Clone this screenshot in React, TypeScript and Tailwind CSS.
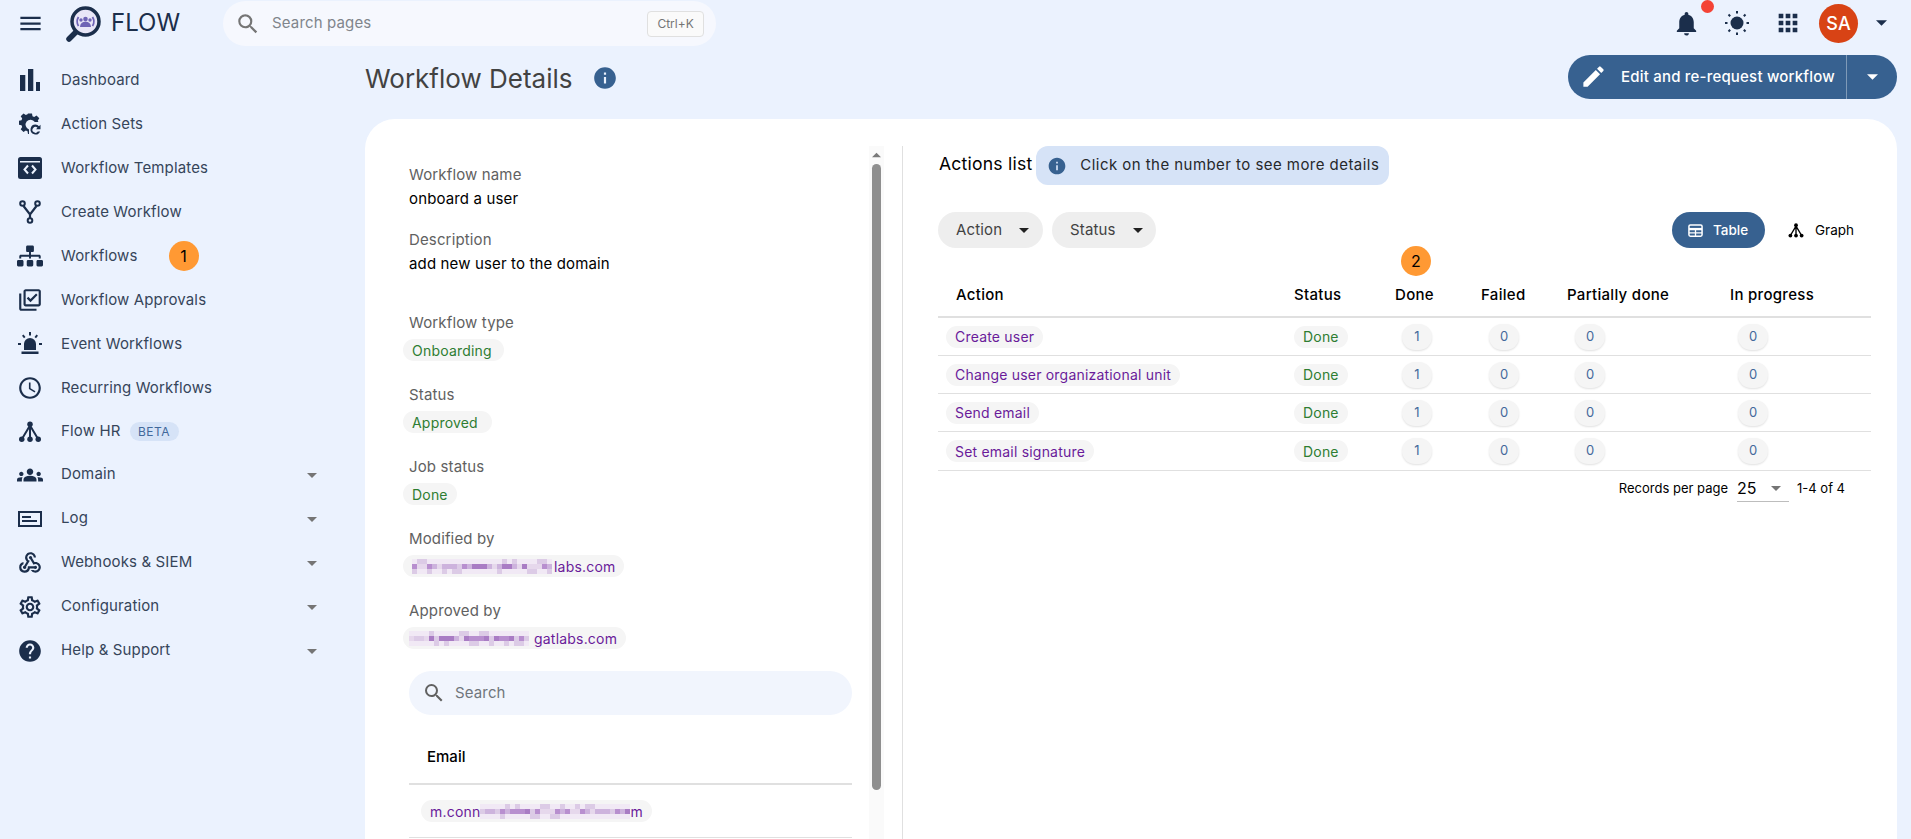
import type { ReactNode } from "react";
import {
  MdApps,
  MdEdit,
  MdGroups,
  MdHelp,
  MdInfo,
  MdMenu,
  MdNotifications,
  MdOutlineAccessTime,
  MdOutlineLibraryAddCheck,
  MdOutlineSettings,
  MdSearch,
  MdWebhook,
} from "react-icons/md";
import { FaSitemap } from "react-icons/fa";

function Caret({ className }: { className: string }) {
  return (
    <svg viewBox="0 0 10 5" className={className} fill="currentColor">
      <path d="M0 0h10L5 5z" />
    </svg>
  );
}

function BarsIcon() {
  return (
    <svg viewBox="0 0 24 24" className="h-6 w-6" fill="currentColor">
      <rect x="2" y="7" width="5.300" height="16" />
      <rect x="10" y="1" width="5.300" height="22" />
      <rect x="18" y="14" width="4" height="9" />
    </svg>
  );
}

function GearRefreshIcon() {
  return (
    <svg viewBox="0 0 24 24" className="h-6 w-6" fill="currentColor">
      <path d="M10 1.500h4l.5 2.700 1.700.7 2.300-1.500 2.800 2.800-1.500 2.300.6 1.500h-3.600A5 5 0 1 0 11 17.400V22h-1l-.5-2.700-1.700-.7-2.300 1.500-2.800-2.800 1.500-2.300-.7-1.700L1 12.800v-4l2.500-.5.7-1.700-1.500-2.300L5.500 1.500l2.300 1.500 1.700-.7z" />
      <path d="M17.500 12.500a5 5 0 1 0 4.600 7h-2.300a2.900 2.900 0 1 1-.3-3.700l-1.500 1.500H22.500v-4.500l-1.500 1.500a5 5 0 0 0-3.500-1.800z" />
    </svg>
  );
}

function TemplateIcon() {
  return (
    <svg viewBox="0 0 24 24" className="h-6 w-6">
      <rect x="0" y="1" width="24" height="22" rx="2.500" fill="currentColor" />
      <rect x="2" y="5" width="20" height="1.500" fill="#ebf2fe" />
      <path d="M10 9.500 6.500 13.500l3.500 4M14 9.500l3.500 4-3.500 4" fill="none" stroke="#ebf2fe" strokeWidth="2" />
    </svg>
  );
}

function ForkIcon() {
  return (
    <svg viewBox="0 0 24 24" className="h-6 w-6" fill="none" stroke="currentColor" strokeWidth="2">
      <circle cx="4.500" cy="3.500" r="2.300" />
      <circle cx="19.500" cy="3.500" r="2.300" />
      <circle cx="12" cy="20.500" r="2.300" />
      <path d="M5.500 6 12 14.500 18.500 6M12 14.500v3.500" strokeWidth="2.200" />
    </svg>
  );
}

function SirenIcon() {
  return (
    <svg viewBox="0 0 24 24" className="h-6 w-6" fill="currentColor">
      <path d="M6 18v-6a6 6 0 0 1 12 0v6zM3.500 19.500h17V22h-17z" />
      <path d="M11 0h2v3.500h-2zM4 3.800l1.500-1.300 2 2.500L6 6.300zM20 3.800l-1.500-1.300-2 2.500L18 6.300zM0 11h3v2H0zM21 11h3v2h-3z" />
    </svg>
  );
}

function TreeIcon({ className }: { className: string }) {
  return (
    <svg viewBox="0 0 24 24" className={className} fill="currentColor">
      <circle cx="12" cy="3.500" r="3" />
      <circle cx="3" cy="20" r="3" />
      <circle cx="12" cy="20" r="3" />
      <circle cx="21" cy="20" r="3" />
      <path d="M12 4v16M12 5 3 20M12 5l9 15" fill="none" stroke="currentColor" strokeWidth="2.200" />
    </svg>
  );
}

function LogIcon() {
  return (
    <svg viewBox="0 0 24 24" className="h-6 w-6" fill="none" stroke="currentColor">
      <rect x="1" y="5" width="22" height="14" strokeWidth="2" />
      <path d="M4 10h9M4 14h15" strokeWidth="1.800" />
    </svg>
  );
}

function SunIcon() {
  return (
    <svg viewBox="0 0 24 24" className="h-6 w-6" fill="currentColor" stroke="currentColor">
      <circle cx="12" cy="12" r="6.500" stroke="none" />
      <path
        d="M12 0v2.500M12 21.500V24M0 12h2.500M21.500 12H24M3.500 3.500l1.700 1.700M18.800 18.800l1.700 1.700M3.500 20.500l1.700-1.700M18.800 5.200l1.700-1.700"
        strokeWidth="2"
      />
    </svg>
  );
}

function TableIcon() {
  return (
    <svg viewBox="0 0 16 16" className="h-[15px] w-[15px]" fill="none" stroke="currentColor">
      <rect x="1" y="2" width="14" height="12" rx="1.500" strokeWidth="1.600" />
      <path d="M1 6.500h14" strokeWidth="2.500" />
      <path d="M8 6v8M1 10.500h14" strokeWidth="1.400" />
    </svg>
  );
}

function Logo() {
  return (
    <svg viewBox="0 0 40 38" className="h-[38px] w-[40px] shrink-0">
      <path d="M12 28 5 35" stroke="#1b2e4b" strokeWidth="5.500" strokeLinecap="round" />
      <circle cx="21.500" cy="17.500" r="13.500" fill="#e9e6f7" stroke="#1b2e4b" strokeWidth="3.500" />
      <path d="M14.500 22a8.500 8.500 0 0 1 0-9M28.500 13a8.500 8.500 0 0 1 0 9" fill="none" stroke="#6f63b5" strokeWidth="1.800" />
      <circle cx="21.500" cy="15" r="2.300" fill="#6f63b5" />
      <circle cx="17" cy="16" r="1.700" fill="#6f63b5" />
      <circle cx="26" cy="16" r="1.700" fill="#6f63b5" />
      <path d="M16 23a5.500 5.500 0 0 1 11 0z" fill="#6f63b5" />
    </svg>
  );
}

const ICON_SIZE = "h-[26px] w-[26px] shrink-0";

const NAV: { label: string; icon: ReactNode; expand?: boolean; badge?: string; beta?: boolean }[] = [
  { label: "Dashboard", icon: <BarsIcon /> },
  { label: "Action Sets", icon: <GearRefreshIcon /> },
  { label: "Workflow Templates", icon: <TemplateIcon /> },
  { label: "Create Workflow", icon: <ForkIcon /> },
  { label: "Workflows", icon: <FaSitemap className={ICON_SIZE} />, badge: "1" },
  { label: "Workflow Approvals", icon: <MdOutlineLibraryAddCheck className={ICON_SIZE} /> },
  { label: "Event Workflows", icon: <SirenIcon /> },
  { label: "Recurring Workflows", icon: <MdOutlineAccessTime className={ICON_SIZE} /> },
  { label: "Flow HR", icon: <TreeIcon className="h-[22px] w-[22px]" />, beta: true },
  { label: "Domain", icon: <MdGroups className={ICON_SIZE} />, expand: true },
  { label: "Log", icon: <LogIcon />, expand: true },
  { label: "Webhooks & SIEM", icon: <MdWebhook className={ICON_SIZE} />, expand: true },
  { label: "Configuration", icon: <MdOutlineSettings className={ICON_SIZE} />, expand: true },
  { label: "Help & Support", icon: <MdHelp className={ICON_SIZE} />, expand: true },
];

const STEP = "flex h-[30px] w-[30px] items-center justify-center rounded-full bg-[#ff9933] text-[16px] text-black";

const PIXEL_TONES = ["bg-[#e6d8ec]", "bg-[#cdb3dd]", "bg-[#b88fcf]", "bg-[#dccbe6]", "bg-[#a97cc4]", "bg-[#f1e9f5]"];

// the emails are pixelated in the screenshot
function Pixels({ seed, count }: { seed: number; count: number }) {
  return (
    <span className="inline-flex">
      {Array.from({ length: count }, (_, i) => (
        <span key={i} className="flex w-[5px] flex-col">
          {[0, 1, 2].map((r) => (
            <span
              key={r}
              className={`h-[5px] ${r === 1 ? PIXEL_TONES[(i * 37 + seed * 11 + ((i * i) % 17)) % 5] : PIXEL_TONES[(i * 53 + r * 7 + seed + ((i * i) % 13)) % 4 === 0 ? 3 : 5]}`}
            />
          ))}
        </span>
      ))}
    </span>
  );
}

function Chip({ children, className }: { children: ReactNode; className: string }) {
  return (
    <span className={`inline-flex h-[22px] items-center whitespace-nowrap rounded-full bg-[#f5f5f5] pl-[9px] text-[14px] tracking-[0.2px] ${className}`}>
      {children}
    </span>
  );
}

const LABEL = "h-[20px] text-[15px] leading-[20px] tracking-[0.14px] text-[#616161]";
const VALUE = "mt-[4px] h-[20px] text-[15px] leading-[20px] tracking-[0.14px] text-black";

function Field({ label, children }: { label: string; children: ReactNode }) {
  return (
    <div className="mt-[24px] flex flex-col items-start">
      <div className={LABEL}>{label}</div>
      <div className="-ml-[6px] mt-[6px] flex h-[22px]">{children}</div>
    </div>
  );
}

const ROW_GRID = "grid grid-cols-[356px_100px_87px_86px_163px_1fr] items-center";
const ACTIONS = ["Create user", "Change user organizational unit", "Send email", "Set email signature"];

function CountChip({ value }: { value: string }) {
  return (
    <span className="ml-[8px] flex h-[26px] w-[30px] items-center justify-center rounded-full bg-[#f5f5f5] text-[13px] text-[#44699b] shadow-[0_1px_2px_rgba(0,0,0,0.12)]">
      {value}
    </span>
  );
}

export default function App() {
  return (
    <div className="h-[839px] w-[1911px] overflow-hidden bg-[#ebf2fe] font-['Inter',sans-serif] text-[#1b2e4b]">
      <header className="flex h-[46px] items-center">
        <MdMenu className="ml-[17px] h-[27px] w-[27px]" />
        <span className="ml-[20px]">
          <Logo />
        </span>
        <span className="ml-[7px] text-[24px] text-[#1b2e4b]">FLOW</span>
        <div className="ml-[43px] mt-[1px] flex h-[45px] w-[493px] items-center rounded-full bg-[#f6f8fe] pl-[12px] pr-[12px]">
          <MdSearch className="h-[26px] w-[26px] text-[#757575]" />
          <span className="ml-[11px] text-[15px] tracking-[0.14px] text-[#80858c]">Search pages</span>
          <span className="ml-auto flex h-[26px] w-[57px] items-center justify-center rounded-[4px] border border-[#e0e0e0] bg-[#fafafa] text-[12px] text-[#757575]">
            Ctrl+K
          </span>
        </div>
        <div className="ml-auto flex items-center pr-[24px]">
          <span className="relative">
            <MdNotifications className="h-[29px] w-[29px]" />
            <span className="absolute -right-[13px] -top-[9px] h-[13px] w-[13px] rounded-full bg-[#f44336]" />
          </span>
          <span className="ml-[24px]">
            <SunIcon />
          </span>
          <MdApps className="ml-[25px] h-[28px] w-[28px]" />
          <span className="ml-[17px] flex h-[39px] w-[39px] items-center justify-center rounded-full bg-[#d84315] text-[18px] font-medium text-white">SA</span>
          <Caret className="ml-[18px] h-[6px] w-[11px]" />
        </div>
      </header>

      <div className="flex">
        <nav className="w-[365px] shrink-0 pt-[12px]">
          {NAV.map((item, i) => (
            <div key={item.label} className={`flex items-center pl-[18px] ${i === 8 ? "h-[43px]" : "h-[44px]"}`}>
              <span className="flex w-[24px] items-center justify-center">{item.icon}</span>
              <span className={`ml-[19px] text-[15px] tracking-[0.14px] text-[#36455a] ${item.expand ? "mb-[2px]" : ""}`}>{item.label}</span>
              {item.badge && <span className={`${STEP} ml-[31px]`}>{item.badge}</span>}
              {item.beta && (
                <span className="ml-[9px] flex h-[19px] w-[49px] items-center justify-center rounded-full bg-[#d6e3f7] text-[12px] tracking-[0.5px] text-[#41689b]">BETA</span>
              )}
              {item.expand && <Caret className="ml-auto mr-[48px] h-[5px] w-[10px] text-[#757575]" />}
            </div>
          ))}
        </nav>

        <main className="w-[1532px] shrink-0">
          <div className="flex h-[73px] items-center pb-[12px]">
            <h1 className="mt-[3px] text-[26px] text-[#424242]">Workflow Details</h1>
            <MdInfo className="ml-[20px] mt-[3px] h-[26px] w-[26px] text-[#376190]" />
            <div className="ml-auto flex h-[44px] w-[329px] items-center rounded-full bg-[#376190] text-white">
              <MdEdit className="ml-[12px] h-[27px] w-[27px]" />
              <span className="ml-[14px] mt-[1px] whitespace-nowrap text-[15px] font-medium tracking-[0.2px]">Edit and re-request workflow</span>
              <span className="ml-auto flex h-full w-[51px] items-center justify-center border-l border-[#7f9ab8]">
                <Caret className="h-[6px] w-[11px]" />
              </span>
            </div>
          </div>

          <div className="flex h-[720px] rounded-t-[30px] bg-white pt-[27px]">
            <div className="flex h-full w-[538px] shrink-0 border-r border-[#e0e0e0] pl-[44px] pr-[18px]">
              <div className="w-[443px] shrink-0 pt-[19px]">
                <div className={LABEL}>Workflow name</div>
                <div className={VALUE}>onboard a user</div>
                <div className={`mt-[21px] ${LABEL}`}>Description</div>
                <div className={VALUE}>add new user to the domain</div>
                <div className="h-[15px]" />
                <Field label="Workflow type">
                  <Chip className="pr-[12px] text-[#2e7d32]">Onboarding</Chip>
                </Field>
                <Field label="Status">
                  <Chip className="pr-[14px] text-[#2e7d32]">Approved</Chip>
                </Field>
                <Field label="Job status">
                  <Chip className="pr-[9px] text-[#2e7d32]">Done</Chip>
                </Field>
                <Field label="Modified by">
                  <Chip className="pr-[8px] text-[#6a1b9a]">
                    <span className="mr-[2px] flex">
                      <Pixels seed={2} count={28} />
                    </span>
                    labs.com
                  </Chip>
                </Field>
                <Field label="Approved by">
                  <Chip className="pr-[9px] text-[#6a1b9a]">
                    <span className="-ml-[3px] mr-[5px] flex">
                      <Pixels seed={5} count={24} />
                    </span>
                    gatlabs.com
                  </Chip>
                </Field>
                <div className="mt-[22px] flex h-[44px] items-center rounded-full bg-[#f1f5fd] pl-[13px]">
                  <MdSearch className="h-[24px] w-[24px] text-[#616161]" />
                  <span className="ml-[9px] text-[15px] tracking-[0.14px] text-[#70757c]">Search</span>
                </div>
                <div className="flex h-[70px] items-center border-b-2 border-[#e0e0e0] pl-[18px] pt-[17px] text-[15px] font-medium text-black">Email</div>
                <div className="flex h-[53px] items-center border-b border-[#e0e0e0] pl-[12px]">
                  <Chip className="pr-[9px] text-[#6a1b9a]">
                    m.conn
                    <Pixels seed={3} count={30} />
                    m
                  </Chip>
                </div>
              </div>
              <div className="ml-[17px] h-full w-[15px] shrink-0 bg-[#fafafa] pt-[6px]">
                <Caret className="mx-auto h-[6px] w-[9px] rotate-180 text-[#7a7a7a]" />
                <div className="mx-auto mt-[6px] h-[626px] w-[9px] rounded-full bg-[#8f8f8f]" />
              </div>
            </div>

            <div className="w-[994px] pl-[35px] pr-[26px]">
              <div className="flex h-[39px] items-center">
                <span className="-mt-[3px] ml-[1px] whitespace-nowrap text-[17.6px] tracking-[0.2px] text-black">Actions list</span>
                <div className="ml-[4px] flex h-full w-[353px] shrink-0 items-center rounded-[12px] bg-[#d6e3f7] pl-[11px]">
                  <MdInfo className="h-[20px] w-[20px] text-[#376190]" />
                  <span className="ml-[13px] whitespace-nowrap text-[15px] tracking-[0.45px] text-[#26282b]">Click on the number to see more details</span>
                </div>
              </div>

              <div className="mt-[27px] flex h-[36px] items-center">
                <div className="flex h-full w-[105px] items-center rounded-full bg-[#eeeeee] pl-[18px] text-[15px] tracking-[0.14px] text-[#424242]">
                  Action
                  <Caret className="ml-[17px] h-[5px] w-[10px] text-[#212121]" />
                </div>
                <div className="ml-[9px] flex h-full w-[104px] items-center rounded-full bg-[#eeeeee] pl-[18px] text-[15px] tracking-[0.14px] text-[#424242]">
                  Status
                  <Caret className="ml-[17px] h-[5px] w-[10px] text-[#212121]" />
                </div>
                <div className="ml-auto flex h-full w-[93px] items-center rounded-[18px] bg-[#376190] pl-[16px] text-[13.5px] font-medium text-white">
                  <TableIcon />
                  <span className="ml-[10px]">Table</span>
                </div>
                <div className="ml-[23px] flex w-[83px] items-center text-[13.5px] text-black">
                  <TreeIcon className="h-[15px] w-[16px]" />
                  <span className="ml-[11px]">Graph</span>
                </div>
              </div>

              <div className="mt-[24px]">
                <div className={`${ROW_GRID} relative h-[46px] border-b-2 border-[#e0e0e0] pt-[2px] text-[15px] font-medium tracking-[0.3px] text-black`}>
                  <span className="pl-[18px]">Action</span>
                  <span>Status</span>
                  <span className="relative pl-[1px]">
                    Done
                    <span className={`${STEP} absolute -top-[38px] left-[7px] font-normal`}>2</span>
                  </span>
                  <span>Failed</span>
                  <span>Partially done</span>
                  <span>In progress</span>
                </div>
                {ACTIONS.map((action, i) => (
                  <div key={action} className={`${ROW_GRID} ${i === 3 ? "h-[39px]" : "h-[38px]"} border-b border-[#e0e0e0]`}>
                    <span className="flex pl-[8px]">
                      <Chip className="pr-[9px] text-[#6a1b9a]">{action}</Chip>
                    </span>
                    <span className="flex">
                      <Chip className="pr-[9px] text-[#2e7d32]">Done</Chip>
                    </span>
                    <CountChip value="1" />
                    <CountChip value="0" />
                    <CountChip value="0" />
                    <CountChip value="0" />
                  </div>
                ))}
              </div>

              <div className="flex h-[35px] items-center justify-end pr-[26px] text-[13px] text-black">
                <span>Records per page</span>
                <span className="ml-[9px] flex h-[26px] w-[52px] items-center justify-between border-b border-[#bdbdbd] pr-[8px] text-[16px]">
                  25
                  <Caret className="h-[5px] w-[10px] text-[#757575]" />
                </span>
                <span className="ml-[8px]">1-4 of 4</span>
              </div>
            </div>
          </div>
        </main>
      </div>
    </div>
  );
}
